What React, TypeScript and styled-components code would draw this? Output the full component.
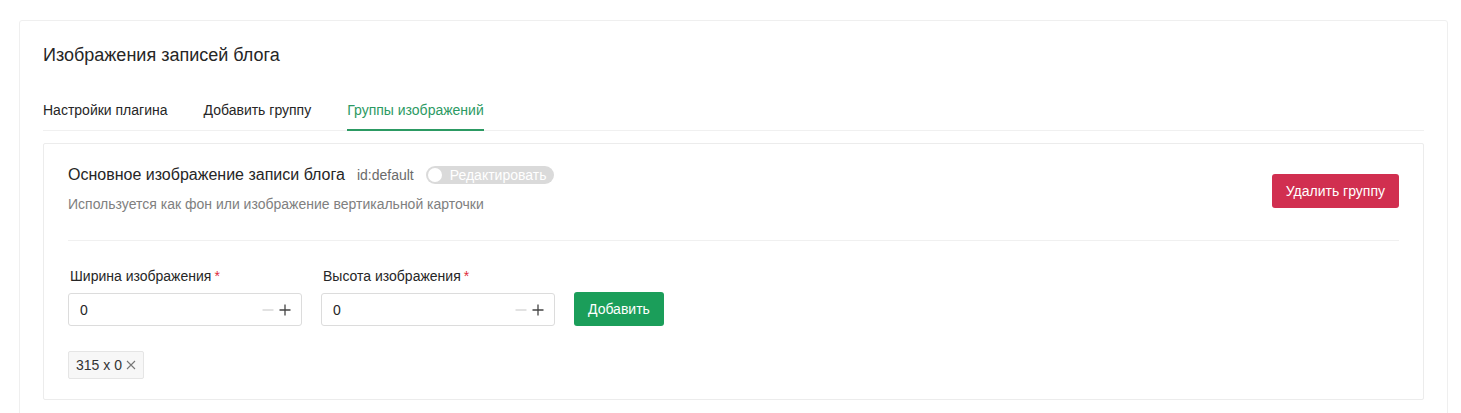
import React from 'react'
import styled, { createGlobalStyle } from 'styled-components'

const GlobalStyle = createGlobalStyle`
  html, body {
    margin: 0;
    padding: 0;
    background: #fff;
  }
  body {
    font-family: 'Liberation Sans', Arial, sans-serif;
    color: #262626;
  }
  * {
    box-sizing: border-box;
  }
`

const Page = styled.div`
  padding: 20px 14px 0 19px;
`

const Card = styled.section`
  width: 1429px;
  min-height: 420px;
  border: 1px solid #efefef;
  border-radius: 3px;
  padding: 22px 23px 0 23px;
`

const CardTitle = styled.h2`
  margin: 0;
  font-size: 18px;
  line-height: 24px;
  font-weight: normal;
  color: #262626;
`

const Tabs = styled.nav`
  display: flex;
  gap: 36px;
  margin-top: 28px;
  border-bottom: 1px solid #f0f0f0;
`

const Tab = styled.div<{ $active?: boolean }>`
  font-size: 14px;
  line-height: 20px;
  padding: 5px 0 9px;
  color: ${({ $active }) => ($active ? '#2c9a63' : '#262626')};
  border-bottom: 2px solid ${({ $active }) => ($active ? '#2c9a63' : 'transparent')};
  margin-bottom: -1px;
`

const Panel = styled.div`
  margin-top: 12px;
  border: 1px solid #ececec;
  border-radius: 2px;
  padding: 20px 24px 20px 24px;
`

const PanelHeader = styled.div`
  display: flex;
  align-items: center;
  justify-content: space-between;
`

const HeadingRow = styled.div`
  display: flex;
  align-items: center;
  gap: 12px;
`

const GroupTitle = styled.div`
  font-size: 16px;
  line-height: 22px;
  color: #262626;
`

const GroupId = styled.span`
  font-size: 14px;
  color: #6b6b6b;
`

const Toggle = styled.div`
  display: flex;
  align-items: center;
  width: 128px;
  height: 18px;
  border-radius: 9px;
  background: #dadada;
  padding: 0 2px;
  gap: 8px;
  overflow: hidden;
  white-space: nowrap;
`

const Knob = styled.span`
  flex: none;
  width: 14px;
  height: 14px;
  border-radius: 50%;
  background: #fff;
`

const ToggleLabel = styled.span`
  font-size: 14px;
  color: #fff;
`

const Subtitle = styled.div`
  margin-top: 8px;
  font-size: 14px;
  line-height: 20px;
  color: #808080;
`

const Button = styled.button<{ $variant: 'danger' | 'primary' }>`
  border: none;
  border-radius: 3px;
  height: 34px;
  padding: 0 14px;
  font-family: inherit;
  font-size: 14px;
  color: #fff;
  background: ${({ $variant }) => ($variant === 'danger' ? '#d12f50' : '#1b9e5a')};
  cursor: pointer;
`

const HeaderAction = styled.div`
  padding-top: 3px;
`

const Divider = styled.hr`
  border: none;
  border-top: 1px solid #f0f0f0;
  margin: 26px 0 25px;
`

const FormRow = styled.div`
  display: flex;
  align-items: flex-end;
  gap: 19px;
`

const Field = styled.div`
  display: flex;
  flex-direction: column;
  gap: 7px;
`

const Label = styled.label`
  font-size: 14px;
  line-height: 20px;
  padding-left: 2px;
  color: #262626;
`

const Required = styled.span`
  color: #e02b3c;
  margin-left: 3px;
`

const NumberBox = styled.div`
  display: flex;
  align-items: center;
  width: 234px;
  height: 33px;
  border: 1px solid #dcdcdc;
  border-radius: 3px;
  padding: 0 10px 0 11px;
  font-size: 14px;
`

const NumberValue = styled.span`
  flex: 1;
  color: #262626;
`

const Steppers = styled.div`
  display: flex;
  align-items: center;
  gap: 5px;
`

const Tags = styled.div`
  display: flex;
  margin-top: 25px;
`

const Tag = styled.span`
  display: inline-flex;
  align-items: center;
  gap: 4px;
  height: 28px;
  padding: 0 7px;
  border: 1px solid #e5e5e5;
  border-radius: 2px;
  background: #f7f7f7;
  font-size: 14px;
  color: #333;
`

const Minus = () => (
  <svg width="12" height="12" viewBox="0 0 12 12">
    <path d="M0.5 6h11" stroke="#cfcfcf" strokeWidth="1.2" />
  </svg>
)

const Plus = () => (
  <svg width="12" height="12" viewBox="0 0 12 12">
    <path d="M0.5 6h11M6 0.5v11" stroke="#444" strokeWidth="1.3" />
  </svg>
)

const Close = () => (
  <svg width="10" height="10" viewBox="0 0 10 10">
    <path d="M1 1l8 8M9 1l-8 8" stroke="#777" strokeWidth="1.1" />
  </svg>
)

const NumberInput = ({ label, value }: { label: string; value: number }) => (
  <Field>
    <Label>
      {label}
      <Required>*</Required>
    </Label>
    <NumberBox>
      <NumberValue>{value}</NumberValue>
      <Steppers>
        <Minus />
        <Plus />
      </Steppers>
    </NumberBox>
  </Field>
)

const tabs = ['Настройки плагина', 'Добавить группу', 'Группы изображений']

export default function App() {
  return (
    <>
      <GlobalStyle />
      <Page>
        <Card>
          <CardTitle>Изображения записей блога</CardTitle>
          <Tabs>
            {tabs.map((t, i) => (
              <Tab key={t} $active={i === 2}>
                {t}
              </Tab>
            ))}
          </Tabs>
          <Panel>
            <PanelHeader>
              <div>
                <HeadingRow>
                  <GroupTitle>Основное изображение записи блога</GroupTitle>
                  <GroupId>id:default</GroupId>
                  <Toggle>
                    <Knob />
                    <ToggleLabel>Редактировать</ToggleLabel>
                  </Toggle>
                </HeadingRow>
                <Subtitle>Используется как фон или изображение вертикальной карточки</Subtitle>
              </div>
              <HeaderAction>
                <Button $variant="danger">Удалить группу</Button>
              </HeaderAction>
            </PanelHeader>
            <Divider />
            <FormRow>
              <NumberInput label="Ширина изображения" value={0} />
              <NumberInput label="Высота изображения" value={0} />
              <Button $variant="primary">Добавить</Button>
            </FormRow>
            <Tags>
              <Tag>
                315 x 0
                <Close />
              </Tag>
            </Tags>
          </Panel>
        </Card>
      </Page>
    </>
  )
}
